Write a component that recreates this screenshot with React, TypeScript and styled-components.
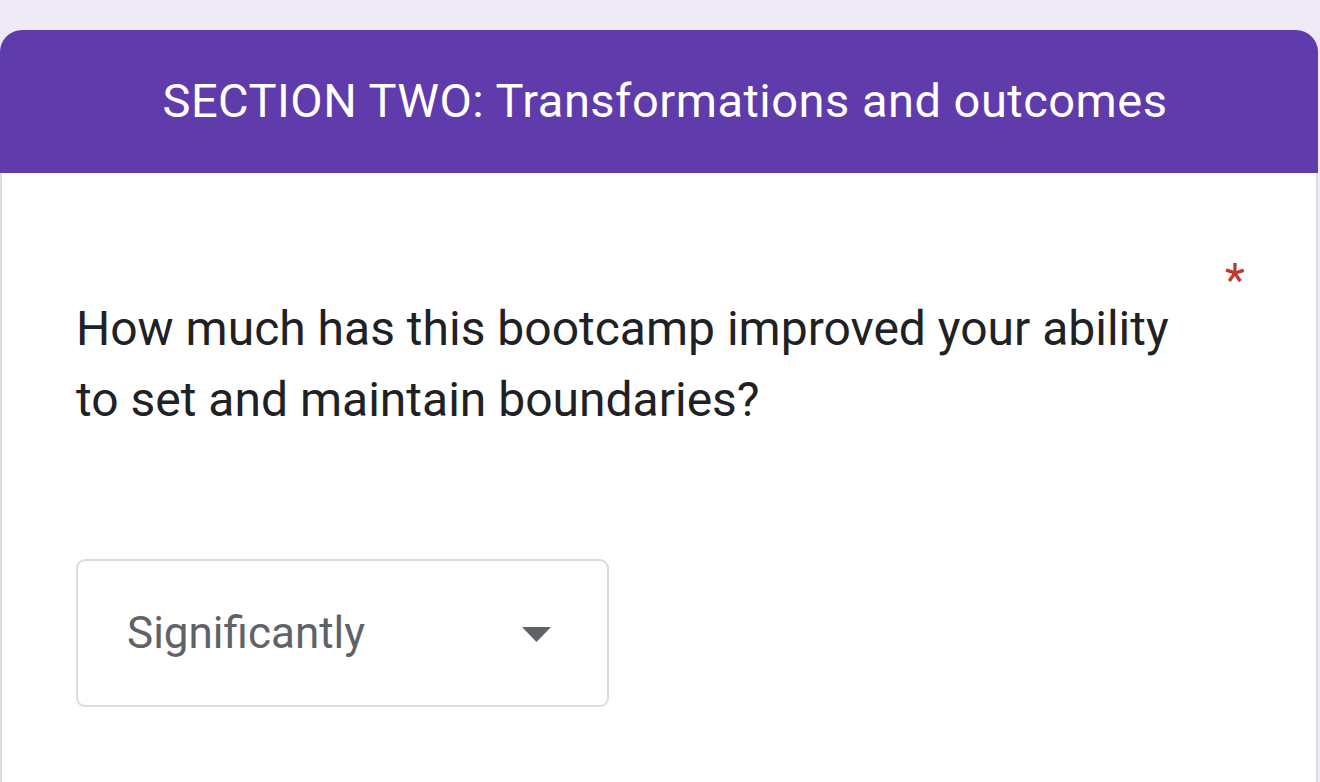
import React from "react";
import styled, { createGlobalStyle } from "styled-components";

const Global = createGlobalStyle`
  html, body { margin: 0; padding: 0; }
  body {
    background: #efebf6;
    font-family: Roboto, "Noto Sans", Arial, sans-serif;
    width: 1320px;
    height: 782px;
    overflow: hidden;
  }
`;

const Page = styled.div`
  padding-top: 30px;
  width: 1320px;
  height: 782px;
  box-sizing: border-box;
`;

const Card = styled.div`
  width: 1318px;
  display: flex;
  flex-direction: column;
`;

const Header = styled.div`
  height: 143px;
  background: #5f3bac;
  border-radius: 22px 22px 0 0;
  display: flex;
  align-items: center;
  justify-content: center;
  color: #ffffff;
  font-size: 47px;
  letter-spacing: 0.5px;
  font-weight: 400;
  padding: 0 0 2px 12px;
  box-sizing: border-box;
`;

const Body = styled.div`
  background: #ffffff;
  border: 2px solid #dadce0;
  border-top: none;
  border-radius: 0 0 22px 22px;
  height: 640px;
  box-sizing: border-box;
  padding: 84px 0 0 74px;
`;

const QuestionRow = styled.div`
  display: flex;
  align-items: flex-start;
`;

const QuestionText = styled.div`
  width: 1120px;
  margin-top: 36px;
  font-size: 48px;
  line-height: 71px;
  color: #202124;
`;

const Asterisk = styled.span`
  font-size: 46px;
  line-height: 1;
  color: #c5372c;
  margin-left: 29px;
`;

const Select = styled.div`
  margin-top: 124px;
  width: 533px;
  height: 148px;
  border: 2px solid #dadce0;
  border-radius: 9px;
  box-sizing: border-box;
  display: flex;
  align-items: center;
  justify-content: space-between;
  padding: 0 56px 0 49px;
`;

const SelectValue = styled.span`
  font-size: 44px;
  color: #5f6368;
`;

const Caret = styled.svg`
  width: 29px;
  height: 15px;
  display: block;
  margin-top: 2px;
`;

export default function App() {
  return (
    <>
      <Global />
      <Page>
        <Card>
          <Header>SECTION TWO: Transformations and outcomes</Header>
          <Body>
            <QuestionRow>
              <QuestionText>
                How much has this bootcamp improved your ability to set and maintain boundaries?
              </QuestionText>
              <Asterisk>*</Asterisk>
            </QuestionRow>
            <Select>
              <SelectValue>Significantly</SelectValue>
              <Caret viewBox="0 0 29 15">
                <polygon points="0,0 29,0 14.5,15" fill="#5f6368" />
              </Caret>
            </Select>
          </Body>
        </Card>
      </Page>
    </>
  );
}
